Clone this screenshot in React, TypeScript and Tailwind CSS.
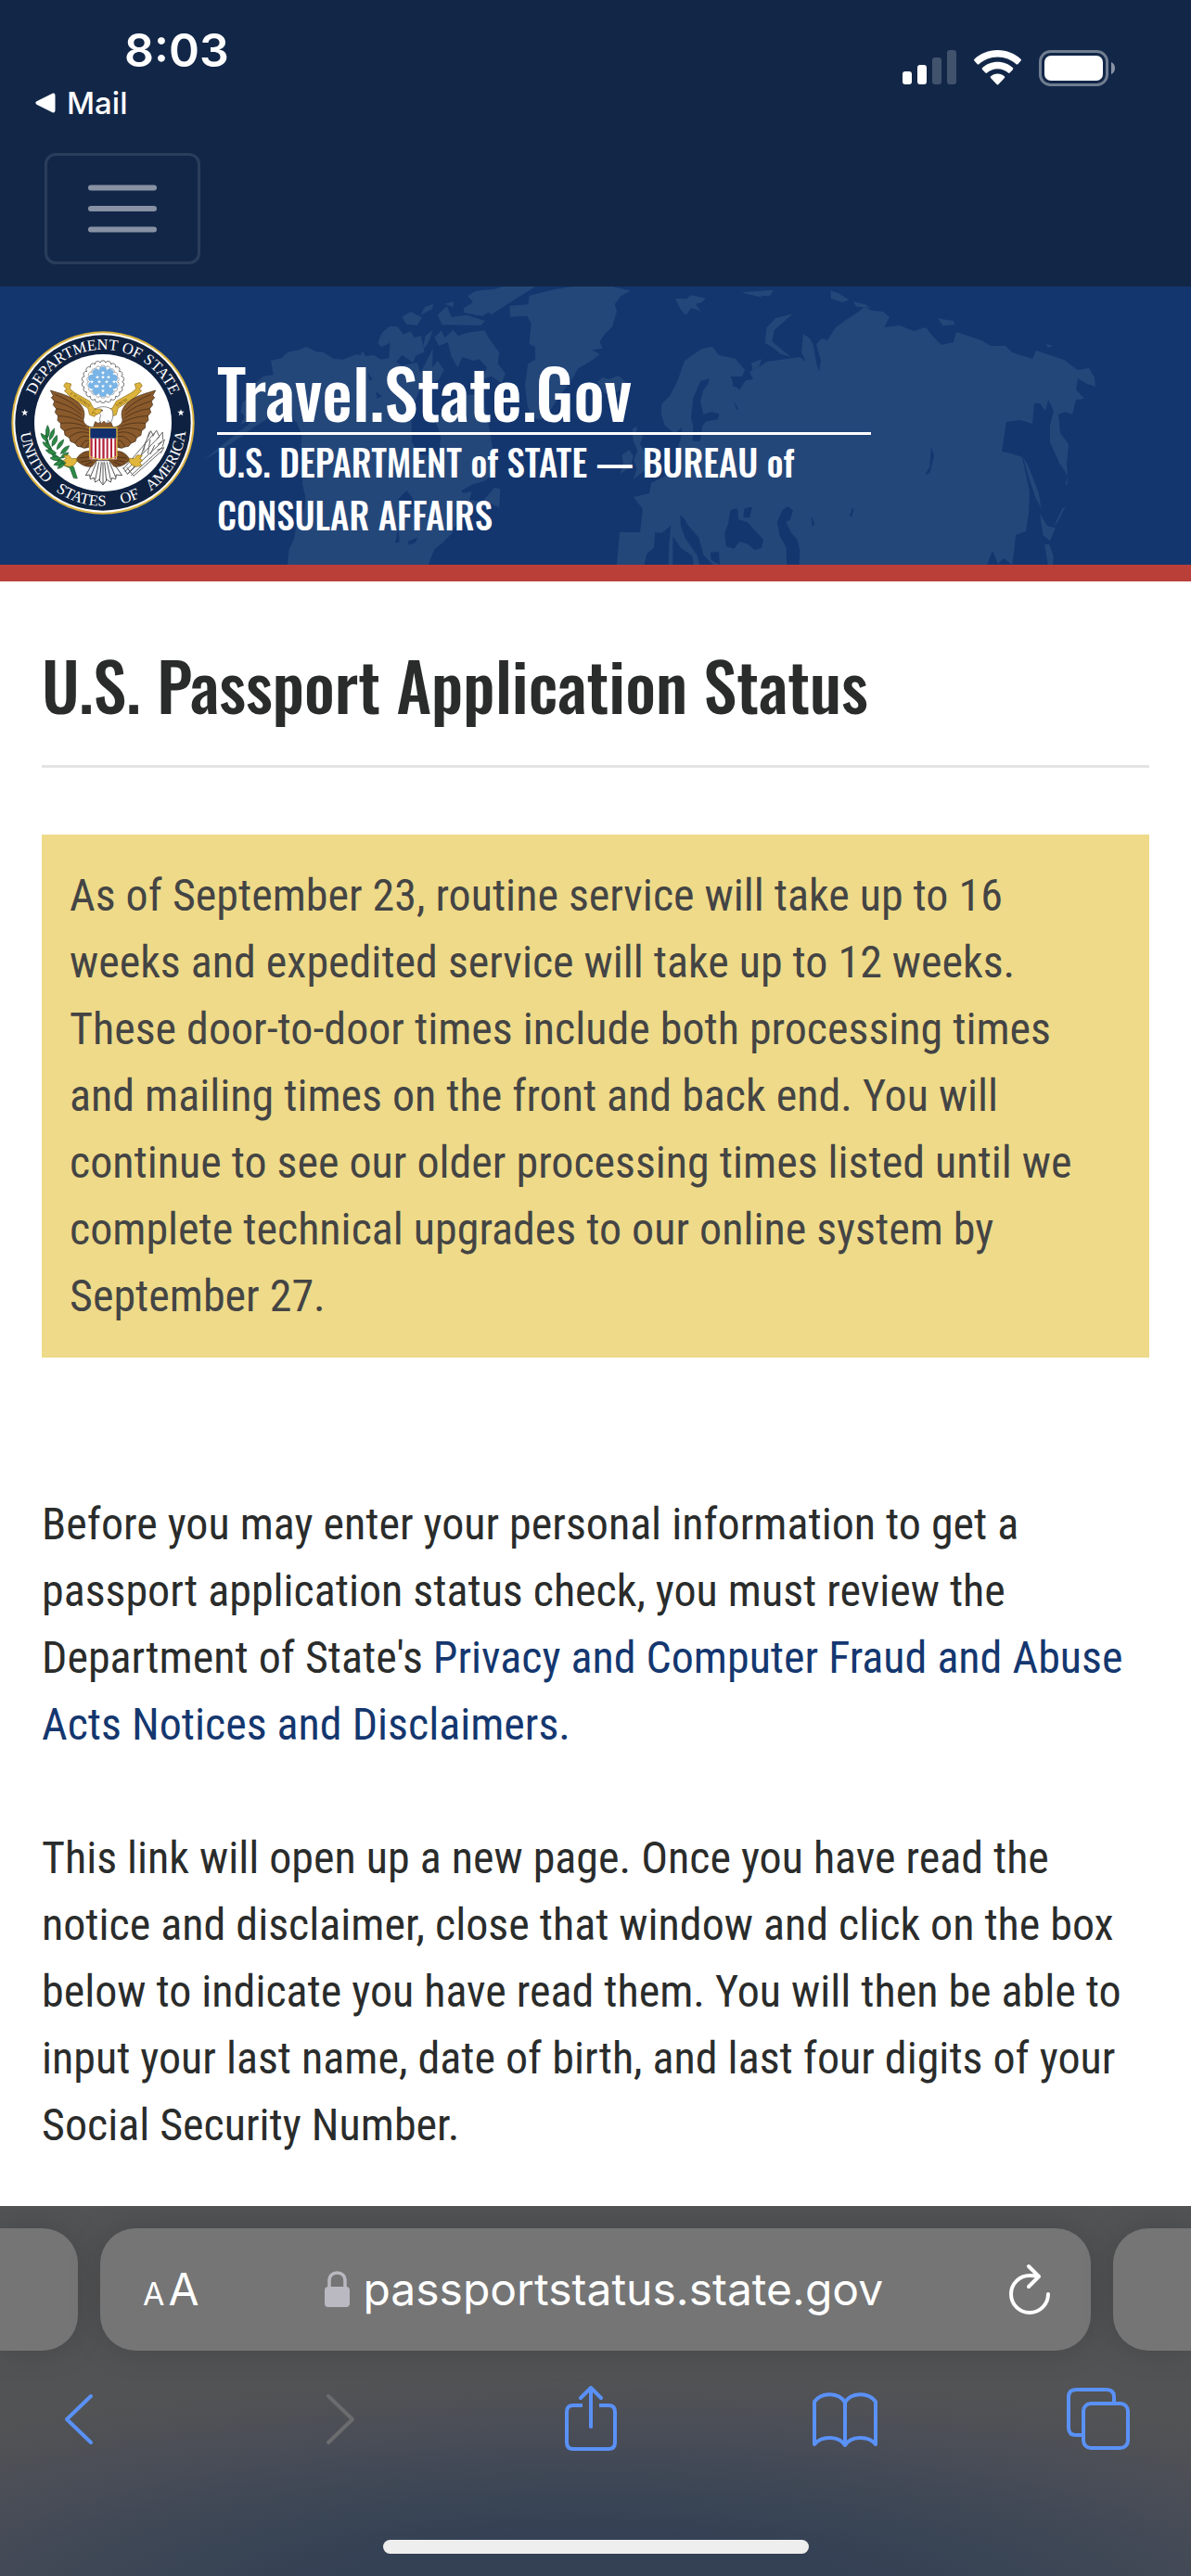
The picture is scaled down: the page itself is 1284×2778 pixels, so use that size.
const oswald = "font-['Oswald','Roboto_Condensed',sans-serif]";
const robotoCondensed = "font-['Roboto_Condensed',Roboto,sans-serif]";
const inter = "font-[Inter,'Liberation_Sans',sans-serif]";

function SignalIcon() {
  return (
    <svg viewBox="0 0 58 38" className="h-[38px] w-[58px]" fill="#fff" aria-hidden="true">
      <rect x="0" y="23" width="10" height="14" rx="3" />
      <rect x="16" y="16" width="10" height="21" rx="3" />
      <rect x="32" y="8" width="10" height="29" rx="3" opacity="0.2" />
      <rect x="48" y="0" width="10" height="37" rx="3" opacity="0.2" />
    </svg>
  );
}

function WifiIcon() {
  return (
    <svg viewBox="0 0 51 38" className="h-[38px] w-[51px]" fill="#fff" aria-hidden="true">
      <path d="M25.500 0C35.500 0 44.200 3.800 50.500 9.700c.6.600.6 1.300.1 1.900l-3.300 3.600c-.5.500-1.200.500-1.700 0C40.300 10.400 33.200 7.400 25.500 7.400S10.700 10.400 5.400 15.200c-.5.500-1.200.500-1.700 0L.4 11.600c-.5-.6-.5-1.300.1-1.900C6.800 3.800 15.500 0 25.500 0z" />
      <path d="M25.500 12.800c6.400 0 12.200 2.400 16.400 6.300.5.500.5 1.200.1 1.800l-3.400 3.700c-.5.500-1.200.500-1.700 0-3-2.800-7-4.400-11.400-4.400s-8.400 1.600-11.400 4.400c-.5.500-1.200.500-1.700 0L9 20.900c-.5-.6-.4-1.300.1-1.800 4.200-3.900 10-6.300 16.400-6.300z" />
      <path d="M25.500 25.400c2.900 0 5.500 1.100 7.400 2.800.5.500.5 1.100.1 1.700l-6.600 7.200c-.5.500-1.300.500-1.800 0L18 29.900c-.4-.6-.4-1.200.1-1.700 1.900-1.700 4.500-2.800 7.400-2.800z" />
    </svg>
  );
}

function BatteryIcon() {
  return (
    <svg viewBox="0 0 82 40" className="h-10 w-[82px]" aria-hidden="true">
      <rect x="1.500" y="1.500" width="72" height="36" rx="11" fill="none" stroke="#fff" strokeOpacity="0.400" strokeWidth="3" />
      <rect x="6" y="6" width="63" height="27" rx="7" fill="#fff" />
      <path d="M78 13c2.500 1 4 3.500 4 6.500s-1.500 5.500-4 6.500z" fill="#fff" fillOpacity="0.500" />
    </svg>
  );
}

function WorldMap() {
  return (
    <svg viewBox="0 0 1284 300" preserveAspectRatio="xMidYMin slice" className="absolute inset-0 h-full w-full" aria-hidden="true">
      <g fill="#24477a">
        {/* North America */}
        <g transform="translate(220 0) scale(.33333)">
          <path d="M270 900L275 850L290 820L302 760L325 720L328 680L318 640L322 560L314 520L316 480L300 440L270 415L210 425L160 455L112 492L60 525L0 560L60 512L105 475L140 450L158 430L118 446L132 420L118 405L125 375L160 345L150 325L190 292L224 285L216 240L250 232L272 212L310 204L330 195L366 212L385 212L420 234L450 236L490 220L506 222L512 208L522 226L550 222L572 236L600 232L640 256L690 246L700 280L722 236L740 200L738 262L756 240L776 270L760 300L700 330L670 400L672 500L690 545L740 545L752 600L762 540L765 480L745 430L780 400L830 400L842 350L900 350L925 470L935 540L945 600L905 630L870 640L832 660L838 668L866 664L858 690L900 695L940 650L958 655L955 715L920 700L895 720L870 712L862 740L830 752L810 780L800 800L770 830L745 850L725 900Z" />
          <path d="M562 182L575 150L600 128L625 130L645 155L668 145L680 165L702 160L712 212L684 224L676 246L640 222L612 256L598 230L602 182L572 196Z" />
          <path d="M745 165L768 142L778 166L806 140L822 160L850 150L906 142L930 180L955 214L950 250L975 282L962 312L930 290L900 300L915 262L890 235L870 240L836 228L820 262L800 225L788 180L760 192Z" />
          <path d="M852 30L880 14L940 8L990 -8L1080 -5L1000 45L930 90L900 72L880 95L870 50Z" />
          <path d="M640 98L668 82L705 100L690 125L655 122Z M755 92L785 64L800 98L850 92L910 112L895 126L770 124Z M715 65L742 56L738 72L700 92Z M776 56L808 48L806 66Z M740 140L726 180L705 210L716 160Z" />
        </g>
        {/* Greenland, Iceland, Svalbard, British Isles */}
        <g transform="translate(500 0) scale(.33333)">
          <path d="M0 70L60 30L140 18L210 0L120 60L60 95L0 85Z" />
          <path d="M212 30L290 10L350 0L480 0L540 14L508 30L488 58L495 80L480 130L455 155L440 178L448 200L415 205L440 220L405 245L370 265L350 300L320 340L280 400L250 430L220 425L205 380L198 320L208 250L232 235L230 195L212 185L218 120L205 95L150 98L148 62L208 58Z" />
          <path d="M432 310L448 294L470 300L500 288L526 312L500 340L455 345Z" />
          <path d="M684 38L720 40L735 28L782 38L770 52L750 56L766 80L736 70L718 92L700 72Z M900 20L985 14L960 34Z" />
          <path d="M545 460L562 452L556 478L580 482L570 510L590 545L585 595L548 625L560 590L550 560L562 530L548 500Z M512 545L535 528L548 548L540 585L506 605L516 575Z" />
        </g>
        {/* Europe and Asia */}
        <path d="M665 300L668 265L690 265L693 240L683 227L700 223L702 212L716 205L730 200L732 160L724 156L717 150L713 139L713 127L722 118L730 103L738 80L748 73L757 67L768 65L775 74L793 78L803 90L800 97L787 97L797 112L804 101L812 100L808 92L816 88L827 81L849 78L862 76L869 81L864 71L866 51L873 56L877 64L880 82L883 92L885 80L880 62L886 56L892 58L901 44L912 36L923 29L932 22L940 26L952 27L959 33L953 44L970 42L985 48L998 44L1006 54L1015 63L1028 60L1031 49L1058 58L1068 64L1084 64L1091 71L1113 78L1117 69L1147 79L1162 90L1174 88L1180 98L1181 108L1172 105L1162 99L1160 111L1169 121L1160 122L1156 138L1148 135L1141 138L1143 158L1152 170L1150 192L1151 204L1142 190L1132 168L1132 150L1136 134L1130 122L1127 134L1121 126L1115 126L1113 148L1100 144L1085 146L1080 178L1090 180L1102 184L1110 221L1109 245L1106 264L1095 268L1093 288L1091 300L1082 293L1076 299L1070 285L1064 300Z" />
        <g transform="translate(700 -9) scale(.37244 .33333)">
          <path d="M335 210L340 160L365 130L415 115L395 135L362 168L355 205L410 255L380 245L358 225Z M525 40L550 50L578 70L560 78L526 66Z M590 76L625 85L640 95L600 92Z M835 130L880 138L885 150L850 154Z M268 46L360 38L348 58L315 56Z M1148 214L1168 218L1155 226Z M295 275L325 262L318 285L300 300Z" />
          <path d="M1082 580L1096 605L1126 690L1135 745L1118 710L1100 650Z M1130 760L1152 802L1176 808L1160 850L1140 832Z M1144 860L1158 862L1170 900L1168 928L1154 926Z M1204 740L1180 792L1172 800L1196 745Z M1212 640L1210 668L1204 668Z" />
        </g>
      </g>
      {/* inland seas and lakes */}
      <g fill="#14366f">
        <g transform="translate(500 0) scale(.33333)">
          <path d="M766 305L794 298L790 315L775 335L765 370L775 415L800 405L826 412L822 430L785 436L772 450L764 500L740 500L742 450L735 425L742 360Z M690 470L705 455L700 500L690 520Z" />
          <path d="M583 900L592 865L615 845L618 795L640 798L670 773L664 830L662 900Z M676 808L702 846L738 870L744 900L676 900Z M700 738L714 752L725 772L760 812L775 868L806 900L762 900L755 870L715 812L702 775Z M798 860L825 858L828 900L800 885Z" />
          <path d="M868 292L905 294L880 312L892 330L870 322Z M875 370L888 400L880 395Z" />
        </g>
        <g transform="translate(700 -9) scale(.37244 .33333)">
          <path d="M235 750L255 745L258 780L285 790L305 815L330 845L325 872L305 880L285 860L262 852L245 875L222 868L218 825L228 795Z M275 745L298 740L290 775L272 775Z" />
          <path d="M370 790L385 750L402 738L416 752L408 780L396 790L412 825L428 845L436 880L434 930L398 930L396 870L378 835Z" />
          <path d="M816 545L824 575L812 630L798 636L812 610Z M468 768L479 795L472 805Z M580 770L588 742L592 748L586 772Z" />
        </g>
        <g transform="translate(220 0) scale(.33333)">
          <path d="M625 690L655 660L672 680L690 720L672 716L650 690Z M628 780L618 830L632 826Z M658 825L690 812L684 828L664 836Z M530 280L545 300L535 306Z M555 340L575 355L560 362Z" />
        </g>
      </g>
    </svg>
  );
}

function Scallop({ r, bump, n, fill, stroke }: { r: number; bump: number; n: number; fill: string; stroke?: string }) {
  const points = Array.from({ length: n + 1 }, (_, i) => {
    const a = (i / n) * Math.PI * 2;
    return [(333 + r * Math.cos(a)).toFixed(1), (215 + r * Math.sin(a)).toFixed(1)];
  });
  const d = points.map(([x, y], i) => (i === 0 ? `M${x} ${y}` : `A${bump} ${bump} 0 0 1 ${x} ${y}`)).join("");
  return <path d={d} fill={fill} stroke={stroke} strokeWidth="2.500" />;
}

const star = "M0-8L2-2.500H8L3.200 1.200L5 7L0 3.500L-5 7L-3.200 1.200L-8-2.500H-2Z";

const sealStars = [
  [333, 186], [315, 200], [351, 200], [297, 215], [321, 215], [345, 215], [369, 215],
  [309, 229], [333, 200], [357, 229], [333, 229], [315, 229], [333, 244],
];

function HalfEagle() {
  return (
    <g stroke="#3a2410" strokeWidth="2" strokeLinejoin="round">
      {/* ribbon */}
      <path d="M213 218L230 222L226 238L240 250L290 278L302 300L320 305L306 328L290 322L284 300L232 268L208 244L216 240L206 228Z" fill="#dcb33c" stroke="#8d6b14" />
      {/* wing */}
      <path d="M163 243C190 252 225 258 252 282C272 298 276 318 270 336C268 350 284 362 300 362L292 385V425L282 428L272 430L262 426L250 424L242 414L228 408L224 396L210 388L208 374L196 364L196 350L186 340L188 326L178 314L182 302L172 290L176 278L166 266L172 260Z" fill="#8a5a2c" />
      <path d="M178 256C205 268 235 280 262 310M178 278C210 288 240 300 262 322M182 302C212 306 240 316 264 334M188 326C215 326 242 332 268 346M196 350C220 346 248 348 276 360M208 374C230 364 256 360 288 372M224 396C240 380 262 372 290 382M242 414C254 396 270 386 290 394M262 426C268 410 276 400 291 408M278 428L288 412" fill="none" />
      {/* leg */}
      <path d="M290 440C275 438 255 448 246 468C262 484 282 494 298 488L316 466L300 462Z" fill="#7d5026" />
      <path d="M256 462L288 458M262 474L294 470M276 484L300 474" fill="none" />
      {/* talon */}
      <path d="M248 463L232 464L222 452L206 454L214 464L204 470L214 476L208 486L224 490L238 486L248 474Z" fill="#e0b63c" stroke="#8d6b14" />
    </g>
  );
}

function StateSeal() {
  return (
    <svg viewBox="36 51 594 594" className="size-[198px] shrink-0" role="img" aria-label="Seal of the Department of State">
      <defs>
        <path id="sealTop" d="M96 348A237 237 0 0 1 570 348" />
        <path id="sealBottom" d="M64 348A269 269 0 0 0 602 348" />
        <path id="ribbonLeft" d="M226 256L286 296" />
        <path id="ribbonRight" d="M378 296L436 260" />
      </defs>
      <circle cx="333" cy="348" r="296" fill="#d9b23f" />
      <circle cx="333" cy="348" r="290" fill="#fff" />
      <circle cx="333" cy="348" r="284" fill="#0f2140" />
      <circle cx="333" cy="348" r="222" fill="#fff" />
      <g className="font-['Liberation_Serif',serif]" fill="#fff" fontSize="50">
        <text textAnchor="middle">
          <textPath href="#sealTop" startOffset="50%">DEPARTMENT OF STATE</textPath>
        </text>
        <text textAnchor="middle"><textPath href="#sealBottom" startOffset="15%">UNITED</textPath></text>
        <text textAnchor="middle"><textPath href="#sealBottom" startOffset="41%">STATES</textPath></text>
        <text textAnchor="middle"><textPath href="#sealBottom" startOffset="61%">OF</textPath></text>
        <text textAnchor="middle"><textPath href="#sealBottom" startOffset="83%">AMERICA</textPath></text>
      </g>
      <path d={star} transform="translate(80 315) scale(1.400)" fill="#fff" />
      <path d={star} transform="translate(585 315) scale(1.400)" fill="#fff" />

      <Scallop r={62} bump={9} n={22} fill="#fff" stroke="#555" />
      <Scallop r={46} bump={8} n={18} fill="#fff" stroke="#999" />
      <Scallop r={39} bump={12} n={10} fill="#79b4e6" />
      {sealStars.map(([x, y], i) => (
        <path key={i} d={star} transform={`translate(${x} ${y}) scale(.8)`} fill="#fff" />
      ))}

      {/* tail */}
      <path d="M305 470L277 518L290 516L292 530L304 526L308 540L320 532L333 549L346 532L358 540L362 526L374 530L376 516L395 518L361 470Z" fill="#fff" stroke="#333" strokeWidth="2.500" />
      <path d="M312 475L292 524M320 475L308 532M328 475L322 534M333 475V545M338 475L344 534M346 475L358 532M354 475L374 524" stroke="#333" strokeWidth="2.500" />

      {/* olive branch */}
      <g fill="#2c8a45" stroke="#14522a" strokeWidth="2">
        <path d="M150 385C158 430 180 465 238 490L250 528L238 526L226 494C180 478 150 440 146 388Z" />
        <path d="M154 356Q166 376 154 396Q142 378 154 356Z M176 366Q178 392 160 404Q158 380 176 366Z M132 382Q150 388 156 410Q136 404 132 382Z M138 410Q160 412 166 432Q144 430 138 410Z M184 388Q190 412 168 424Q166 402 184 388Z M206 402Q204 424 184 434Q184 412 206 402Z M148 436Q168 430 182 446Q162 456 148 436Z M224 422Q216 446 196 448Q202 426 224 422Z M162 462Q180 450 196 462Q182 478 162 462Z M222 444Q212 464 196 462Q202 444 222 444Z M174 484Q188 466 204 472Q196 492 174 484Z M186 496Q192 478 208 478Q206 494 186 496Z" />
      </g>

      {/* arrows */}
      <g stroke="#666" strokeWidth="3" fill="none">
        <path d="M398 498L500 380M404 506L516 392M412 514L526 408M424 518L526 426M432 520L522 440M446 482L484 376M478 396L488 374L496 390M494 392L506 372L514 390M508 400L526 378L526 402M510 418L532 402L526 424M508 436L530 428L520 446M470 410L464 440M486 402L478 448M500 420L486 450" />
        <path d="M398 492L412 514L436 488M410 492L432 520" />
      </g>

      <HalfEagle />
      <g transform="translate(666 0) scale(-1 1)">
        <HalfEagle />
      </g>
      <g className="font-['Liberation_Serif',serif]" fill="#5c430a" fontSize="13">
        <text><textPath href="#ribbonLeft">E PLURIBUS</textPath></text>
        <text><textPath href="#ribbonRight">UNUM</textPath></text>
      </g>

      {/* neck and head */}
      <path d="M300 368L308 344L318 350L333 338L348 350L358 344L368 368Z" fill="#8a5a2c" stroke="#3a2410" strokeWidth="2" />
      <path d="M308 304C322 292 352 294 362 306C368 316 366 334 358 348L350 340L344 350L336 342L328 350L322 338L326 322Z" fill="#fff" stroke="#555" strokeWidth="2" />
      <path d="M328 304C314 300 300 306 298 318L306 314L312 322L326 314Z" fill="#e0b63c" stroke="#8d6b14" strokeWidth="2" />
      <circle cx="330" cy="308" r="2.500" fill="#333" />

      {/* shield */}
      <path d="M290 364H378V466H290Z" fill="#fff" />
      <path d="M292 398H299V464H292Z M306 398H312V464H306Z M319 398H325V464H319Z M331 398H338V464H331Z M344 398H350V464H344Z M357 398H363V464H357Z M370 398H376V464H370Z" fill="#b3233d" />
      <path d="M290 364H378V398H290Z" fill="#112f6d" />
      <path d="M290 364H378V456Q360 466 333 466Q308 466 290 456Z" fill="none" stroke="#d9b23f" strokeWidth="4" />
    </svg>
  );
}

function StatusBar() {
  return (
    <div className={`${inter} flex justify-between pt-6 pr-[82px] pl-[38px] text-white`}>
      <div>
        <p className="pl-24 text-[50px] leading-[60px] font-semibold">8:03</p>
        <a href="#mail" className="flex items-center gap-3 text-[33px] leading-[54px] font-medium">
          <svg viewBox="0 0 22 22" className="size-[22px]" fill="#fff" aria-hidden="true">
            <path d="M1.500 9.300L18.500.8Q21.500-.2 21.500 3V19Q21.500 22.200 18.500 21.200L1.500 12.700Q-.8 11 1.500 9.300Z" />
          </svg>
          Mail
        </a>
      </div>
      <div className="flex items-start gap-[19px] pt-[30px]">
        <SignalIcon />
        <WifiIcon />
        <BatteryIcon />
      </div>
    </div>
  );
}

function SiteHeader() {
  return (
    <header>
      <nav className="px-12 pt-[27px] pb-6">
        <button type="button" aria-label="Toggle navigation" className="flex h-[120px] w-[168px] items-center justify-center rounded-xl border-[3px] border-white/10">
          <svg viewBox="0 0 90 90" className="size-[90px]" stroke="#8892a4" strokeWidth="6" strokeLinecap="round" aria-hidden="true">
            <path d="M11 22.500H79M11 45H79M11 67.500H79" />
          </svg>
        </button>
      </nav>
      <div className="relative box-content flex min-h-[300px] items-start border-b-[18px] border-[#ba3f38] bg-[#14366f] pl-3">
        <WorldMap />
        <div className="relative pt-12">
          <StateSeal />
        </div>
        <div className={`${oswald} relative ml-6 w-[705px] pt-[69px] font-medium text-white`}>
          <p className="border-b-[3px] border-white text-[73px] leading-[88px]">
            <a href="#home">Travel.State.Gov</a>
          </p>
          <p className="text-[39px] leading-[57px]">
            U.S. DEPARTMENT of STATE — BUREAU of
            <br />
            CONSULAR AFFAIRS
          </p>
        </div>
      </div>
    </header>
  );
}

function BrowserBar() {
  return (
    <footer className={`${inter} mt-auto overflow-hidden bg-[#525354] bg-[radial-gradient(ellipse_80%_62%_at_50%_108%,#334054_0%,#344054_30%,#3c4655_52%,#494d57_75%,#52535400_100%)] pt-6 pb-6 text-white`}>
      <div className="flex h-[132px] gap-6">
        <div className="w-[84px] rounded-r-[38px] bg-[#757575] shadow-[0_0_36px_rgba(0,0,0,0.15)]" />
        <div className="flex flex-1 items-center justify-between rounded-[38px] bg-[#757575] pr-11 pl-[46px] shadow-[0_0_36px_rgba(0,0,0,0.15)]">
          <button type="button" aria-label="Page settings" className="flex items-baseline gap-1">
            <span className="text-[34px]">A</span>
            <span className="text-[48px]">A</span>
          </button>
          <button type="button" className="flex items-center gap-[14px] text-[48px]">
            <svg viewBox="0 0 27 40" className="h-10 w-[27px]" aria-hidden="true">
              <path d="M5 20V11C5 5 8.500 2 13.500 2S22 5 22 11V20" fill="none" stroke="#bab9c1" strokeWidth="3.500" />
              <rect x="0" y="17" width="27" height="22" rx="4" fill="#bab9c1" />
            </svg>
            passportstatus.state.gov
          </button>
          <button type="button" aria-label="Reload">
            <svg viewBox="0 0 44 56" className="h-14 w-11" fill="none" stroke="#fff" strokeWidth="4" strokeLinecap="round" strokeLinejoin="round" aria-hidden="true">
              <path d="M42 33A20 20 0 1 1 22 13Q27 13 32 14M21 3L32 14L21 25" />
            </svg>
          </button>
        </div>
        <div className="w-[84px] rounded-l-[38px] bg-[#757575] shadow-[0_0_36px_rgba(0,0,0,0.15)]" />
      </div>

      <div className="mt-[38px] flex justify-between pr-16 pl-[54px] text-[#5a91f7] [&_svg]:size-[72px] [&_svg]:fill-none [&_svg]:stroke-current [&_svg]:stroke-[4px]">
        <button type="button" aria-label="Back">
          <svg viewBox="0 0 72 72" strokeLinecap="round" strokeLinejoin="round"><path d="M44 11L18 36L44 61" /></svg>
        </button>
        <button type="button" aria-label="Forward" disabled className="text-[#6b6c6e]">
          <svg viewBox="0 0 72 72" strokeLinecap="round" strokeLinejoin="round"><path d="M26 11L52 36L26 61" /></svg>
        </button>
        <button type="button" aria-label="Share">
          <svg viewBox="0 0 72 72">
            <path d="M27 21H17Q10 21 10 28V61Q10 68 17 68H55Q62 68 62 61V28Q62 21 55 21H45" />
            <path d="M36 44V2M25 13L36 2L47 13" strokeLinecap="round" strokeLinejoin="round" />
          </svg>
        </button>
        <button type="button" aria-label="Bookmarks">
          <svg viewBox="0 0 72 72" strokeLinecap="round" strokeLinejoin="round">
            <path d="M36 18C30 7 11 6 3 17V63C11 53 30 54 36 64C42 54 61 53 69 63V17C61 6 42 7 36 18V64" />
          </svg>
        </button>
        <button type="button" aria-label="Tabs">
          <svg viewBox="0 0 72 72">
            <path d="M18 53H12Q4 53 4 45V12Q4 4 12 4H45Q53 4 53 12V18" />
            <rect x="20" y="19" width="48" height="48" rx="8" />
          </svg>
        </button>
      </div>

      <div className="mx-auto mt-[94px] h-[15px] w-[459px] rounded-full bg-[#eee]" />
    </footer>
  );
}

export default function App() {
  return (
    <div className="flex min-h-screen flex-col bg-white">
      <div className="bg-[#122748]">
        <StatusBar />
        <SiteHeader />
      </div>

      <main className={`${robotoCondensed} px-[45px] pt-[68px] text-5xl leading-[72px] text-[#2a2c2b]`}>
        <h1 className={`${oswald} text-[72px] leading-[86px] font-medium`}>U.S. Passport Application Status</h1>
        <hr className="mt-11 border-t-[3px] border-[#e4e4e4]" />

        <div className="mt-[72px] bg-[#eeda89] px-[30px] py-[30px] text-[#444]">
          <p>
            As of September 23, routine service will take up to 16 weeks and expedited service will take up to 12 weeks.
            These door-to-door times include both processing times and mailing times on the front and back end. You will
            continue to see our older processing times listed until we complete technical upgrades to our online system by
            September 27.
          </p>
        </div>

        <p className="mt-36">
          Before you may enter your personal information to get a passport application status check, you must review the
          Department of State's{" "}
          <a href="#privacy" className="text-[#14376f]">
            Privacy and Computer Fraud and Abuse Acts Notices and Disclaimers.
          </a>
        </p>
        <p className="mt-[72px]">
          This link will open up a new page. Once you have read the notice and disclaimer, close that window and click on
          the box below to indicate you have read them. You will then be able to input your last name, date of birth, and
          last four digits of your Social Security Number.
        </p>
      </main>

      <BrowserBar />
    </div>
  );
}
